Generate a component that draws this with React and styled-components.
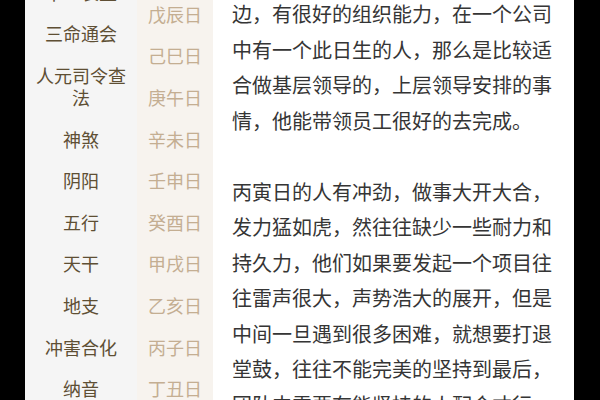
import React from "react";
import styled, { createGlobalStyle } from "styled-components";

const Global = createGlobalStyle`
  html, body { margin: 0; padding: 0; background: #000; }
  body { font-family: "Noto Sans CJK SC", "Noto Sans", sans-serif; }
`;

const Frame = styled.div`
  display: flex;
  width: 600px;
  height: 400px;
  overflow: hidden;
  background: #000;
`;

const Edge = styled.div`
  flex: 0 0 ${(p) => p.$w}px;
  background: #000;
`;

const Nav = styled.ul`
  flex: 0 0 112px;
  margin: 0;
  padding: 0;
  list-style: none;
  background: #f5f5f5;
  display: flex;
  flex-direction: column;
`;

const NavList = styled.div`
  margin-top: -29px;
`;

const NavItem = styled.li`
  padding: 9.8px 10px;
  font-size: 18px;
  line-height: 22px;
  color: #5e4f34;
  text-align: center;
`;

const Dates = styled.div`
  flex: 0 0 76px;
  background: #f7f3ee;
`;

const DateList = styled.div`
  margin-top: -7px;
`;

const DateItem = styled.div`
  height: 41.6px;
  display: flex;
  align-items: center;
  justify-content: center;
  font-size: 18px;
  color: #c4ae92;
`;

const Content = styled.div`
  flex: 0 0 361px;
  background: #fff;
  padding: 0 14px 0 19px;
  box-sizing: border-box;
`;

const Article = styled.div`
  margin-top: -4px;
`;

const Para = styled.p`
  margin: 0 0 35.5px;
  font-size: 20px;
  line-height: 35.5px;
  color: #353535;
`;

const navItems = [
  "十二长生",
  "三命通会",
  "人元司令查法",
  "神煞",
  "阴阳",
  "五行",
  "天干",
  "地支",
  "冲害合化",
  "纳音",
];

const dates = [
  "戊辰日",
  "己巳日",
  "庚午日",
  "辛未日",
  "壬申日",
  "癸酉日",
  "甲戌日",
  "乙亥日",
  "丙子日",
  "丁丑日",
];

export default function App() {
  return (
    <>
      <Global />
      <Frame>
        <Edge $w={25} />
        <Nav>
          <NavList>
            {navItems.map((n) => (
              <NavItem key={n}>{n}</NavItem>
            ))}
          </NavList>
        </Nav>
        <Dates>
          <DateList>
            {dates.map((d) => (
              <DateItem key={d}>{d}</DateItem>
            ))}
          </DateList>
        </Dates>
        <Content>
          <Article>
            <Para>
              边，有很好的组织能力，在一个公司中有一个此日生的人，那么是比较适合做基层领导的，上层领导安排的事情，他能带领员工很好的去完成。
            </Para>
            <Para>
              丙寅日的人有冲劲，做事大开大合，发力猛如虎，然往往缺少一些耐力和持久力，他们如果要发起一个项目往往雷声很大，声势浩大的展开，但是中间一旦遇到很多困难，就想要打退堂鼓，往往不能完美的坚持到最后，团队中需要有能坚持的人配合才行。
            </Para>
          </Article>
        </Content>
        <Edge $w={26} />
      </Frame>
    </>
  );
}
